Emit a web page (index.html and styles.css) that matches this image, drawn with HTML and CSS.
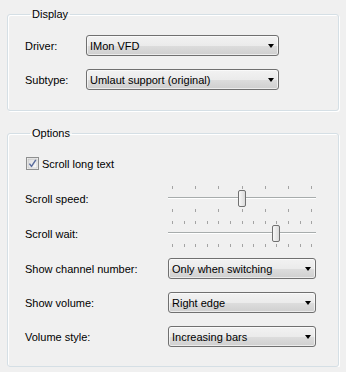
FILE: index.html
```html
<!DOCTYPE html>
<html lang="en">
<head>
    <meta charset="UTF-8">
    <title>Display settings</title>
    <link rel="stylesheet" href="styles.css">
</head>
<body>
    <fieldset class="group group-display">
        <legend>Display</legend>
        <div class="rows">
            <div class="row">
                <span class="label label-short">Driver:</span>
                <div class="combo combo-wide"><span class="combo-text">IMon VFD</span><span class="arrow"></span></div>
            </div>
            <div class="row">
                <span class="label label-short">Subtype:</span>
                <div class="combo combo-wide"><span class="combo-text">Umlaut support (original)</span><span class="arrow"></span></div>
            </div>
        </div>
    </fieldset>

    <fieldset class="group group-options">
        <legend>Options</legend>
        <div class="check-row">
            <svg class="checkbox" width="13" height="13" viewBox="0 0 13 13">
                <defs>
                    <linearGradient id="boxFill" x1="0" y1="0" x2="1" y2="1">
                        <stop offset="0" stop-color="#dcdcdc"/>
                        <stop offset="1" stop-color="#fbfbfb"/>
                    </linearGradient>
                </defs>
                <rect x="0.5" y="0.5" width="12" height="12" fill="#f4f4f4" stroke="#8e8f8f"/>
                <rect x="2" y="2" width="9" height="9" fill="url(#boxFill)" stroke="#b0b0b0" stroke-width="0.5"/>
                <path d="M3.4 6.6 L5.5 9.4 L9.8 2.8" fill="none" stroke="#5a6c9c" stroke-width="1.5" stroke-linejoin="round"/>
            </svg>
            <span>Scroll long text</span>
        </div>

        <div class="row row-slider row-speed">
            <span class="label">Scroll speed:</span>
            <svg class="slider" width="148" height="28" viewBox="0 0 148 28">
                <g stroke="#a3a3a3">
                    <path d="M4.5 1v3M27.5 1v3M50.5 1v3M74.5 1v3M97.5 1v3M120.5 1v3M143.5 1v3"/>
                    <path d="M4.5 24v3M27.5 24v3M50.5 24v3M74.5 24v3M97.5 24v3M120.5 24v3M143.5 24v3"/>
                </g>
                <path d="M0 12.5H148" stroke="#a7acac"/>
                <path d="M0 13.5H148" stroke="#ffffff"/>
                <defs>
                    <linearGradient id="thumbFill" x1="0" y1="0" x2="1" y2="0">
                        <stop offset="0" stop-color="#fafafa"/>
                        <stop offset="1" stop-color="#d8d8d8"/>
                    </linearGradient>
                </defs>
                <rect x="70.5" y="5.5" width="7" height="16" rx="1.5" fill="url(#thumbFill)" stroke="#707070"/>
            </svg>
        </div>

        <div class="row row-slider row-wait">
            <span class="label">Scroll wait:</span>
            <svg class="slider" width="148" height="28" viewBox="0 0 148 28">
                <g stroke="#a3a3a3">
                    <path d="M4.5 1v3M16.5 1v3M27.5 1v3M39.5 1v3M50.5 1v3M62.5 1v3M74.5 1v3M85.5 1v3M97.5 1v3M108.5 1v3M120.5 1v3M132.5 1v3M143.5 1v3"/>
                    <path d="M4.5 24v3M16.5 24v3M27.5 24v3M39.5 24v3M50.5 24v3M62.5 24v3M74.5 24v3M85.5 24v3M97.5 24v3M108.5 24v3M120.5 24v3M132.5 24v3M143.5 24v3"/>
                </g>
                <path d="M0 12.5H148" stroke="#a7acac"/>
                <path d="M0 13.5H148" stroke="#ffffff"/>
                <rect x="104.5" y="5.5" width="7" height="16" rx="1.5" fill="url(#thumbFill)" stroke="#707070"/>
            </svg>
        </div>

        <div class="rows rows-combos">
            <div class="row">
                <span class="label">Show channel number:</span>
                <div class="combo"><span class="combo-text">Only when switching</span><span class="arrow"></span></div>
            </div>
            <div class="row">
                <span class="label">Show volume:</span>
                <div class="combo"><span class="combo-text">Right edge</span><span class="arrow"></span></div>
            </div>
            <div class="row">
                <span class="label">Volume style:</span>
                <div class="combo"><span class="combo-text">Increasing bars</span><span class="arrow"></span></div>
            </div>
        </div>
    </fieldset>
</body>
</html>
```

FILE: styles.css
```css
/* General */
body {
    font-family: 'Liberation Sans', Arial, sans-serif;
    font-size: 11px;
    color: #000;
    background-color: #f0f0f0;
    margin: 0;
    padding: 0;
}

/* Group boxes */
.group {
    border: 1px solid #d5dfe5;
    border-radius: 3px;
    box-shadow: 1px 1px 0 #ffffff, inset 1px 1px 0 #ffffff;
    margin: 0 7px;
    padding: 0 0 0 17px;
    min-width: 0;
}

.group legend {
    line-height: 13px;
    padding: 0 2px;
    margin-left: 5px;
}

.group-display {
    margin-top: 8px;
    padding-top: 14px;
    padding-bottom: 20px;
}

.group-options {
    margin-top: 16px;
    padding-top: 17px;
    padding-bottom: 19px;
}

/* Rows */
.rows {
    display: flex;
    flex-direction: column;
    gap: 13px;
}

.row {
    display: flex;
    align-items: center;
    height: 21px;
}

.label {
    width: 143px;
    flex-shrink: 0;
}

.label-short {
    width: 61px;
}

/* Checkbox */
.check-row {
    display: flex;
    align-items: center;
    gap: 3px;
    height: 13px;
    margin-left: 1px;
}

.checkbox {
    display: block;
}

/* Sliders */
.row-slider {
    height: 28px;
}

.row-speed {
    margin-top: 15px;
}

.row-wait {
    margin-top: 7px;
}

.slider {
    display: block;
}

.rows-combos {
    margin-top: 10px;
}

/* Combo boxes */
.combo {
    box-sizing: border-box;
    width: 148px;
    height: 21px;
    border: 1px solid #707070;
    border-radius: 3px;
    background: linear-gradient(to bottom, #f2f2f2 0%, #ebebeb 50%, #dddddd 51%, #cfcfcf 100%);
    box-shadow: inset 0 0 0 1px rgba(255, 255, 255, 0.6);
    display: flex;
    align-items: center;
    justify-content: space-between;
    padding: 0 4px 0 3px;
}

.combo-wide {
    width: 193px;
}

.arrow {
    width: 0;
    height: 0;
    border-left: 3.5px solid transparent;
    border-right: 3.5px solid transparent;
    border-top: 4px solid #000;
    margin-top: 1px;
}
```
